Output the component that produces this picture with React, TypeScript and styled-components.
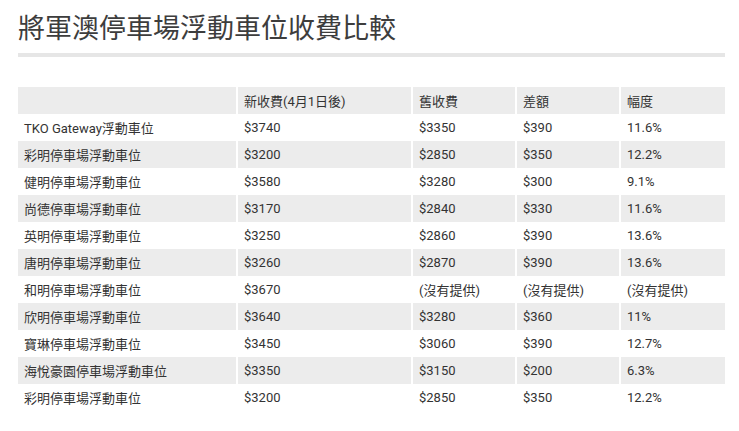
import styled, { createGlobalStyle } from "styled-components";

const GlobalStyle = createGlobalStyle`
  body {
    margin: 0;
    background: #fff;
    font-family: Roboto, "Noto Sans CJK TC", sans-serif;
  }
`;

const Page = styled.div`
  padding: 10px 14px 0 18px;
`;

const Title = styled.h1`
  margin: 0;
  font-family: "Noto Sans CJK TC", sans-serif;
  font-size: 27px;
  line-height: 34px;
  font-weight: 400;
  color: #3d3d3d;
`;

const Divider = styled.div`
  margin-top: 9px;
  height: 4px;
  background: #e6e6e6;
`;

const Table = styled.table`
  margin-top: 30px;
  width: 707px;
  border-collapse: collapse;
  table-layout: fixed;
  font-size: 13px;
  color: #333;
`;

const Row = styled.tr<{ $shaded: boolean }>`
  height: 27px;
  background: ${(p) => (p.$shaded ? "#ececec" : "#fff")};
`;

const Cell = styled.td<{ $w?: number }>`
  box-sizing: border-box;
  width: ${(p) => (p.$w ? `${p.$w}px` : "auto")};
  padding: 0 6px;
  border-right: 2px solid #fff;
  white-space: nowrap;
  &:last-child {
    border-right: none;
  }
`;

const widths = [219, 175, 104, 104, 105];

const header = ["", "新收費(4月1日後)", "舊收費", "差額", "幅度"];

const rows: string[][] = [
  ["TKO Gateway浮動車位", "$3740", "$3350", "$390", "11.6%"],
  ["彩明停車場浮動車位", "$3200", "$2850", "$350", "12.2%"],
  ["健明停車場浮動車位", "$3580", "$3280", "$300", "9.1%"],
  ["尚德停車場浮動車位", "$3170", "$2840", "$330", "11.6%"],
  ["英明停車場浮動車位", "$3250", "$2860", "$390", "13.6%"],
  ["唐明停車場浮動車位", "$3260", "$2870", "$390", "13.6%"],
  ["和明停車場浮動車位", "$3670", "(沒有提供)", "(沒有提供)", "(沒有提供)"],
  ["欣明停車場浮動車位", "$3640", "$3280", "$360", "11%"],
  ["寶琳停車場浮動車位", "$3450", "$3060", "$390", "12.7%"],
  ["海悅豪園停車場浮動車位", "$3350", "$3150", "$200", "6.3%"],
  ["彩明停車場浮動車位", "$3200", "$2850", "$350", "12.2%"],
];

export default function App() {
  return (
    <>
      <GlobalStyle />
      <Page>
        <Title>將軍澳停車場浮動車位收費比較</Title>
        <Divider />
        <Table>
          <tbody>
            <Row $shaded>
              {header.map((h, i) => (
                <Cell key={i} $w={widths[i]}>
                  {h}
                </Cell>
              ))}
            </Row>
            {rows.map((r, ri) => (
              <Row key={ri} $shaded={ri % 2 === 1}>
                {r.map((c, ci) => (
                  <Cell key={ci}>{c}</Cell>
                ))}
              </Row>
            ))}
          </tbody>
        </Table>
      </Page>
    </>
  );
}
